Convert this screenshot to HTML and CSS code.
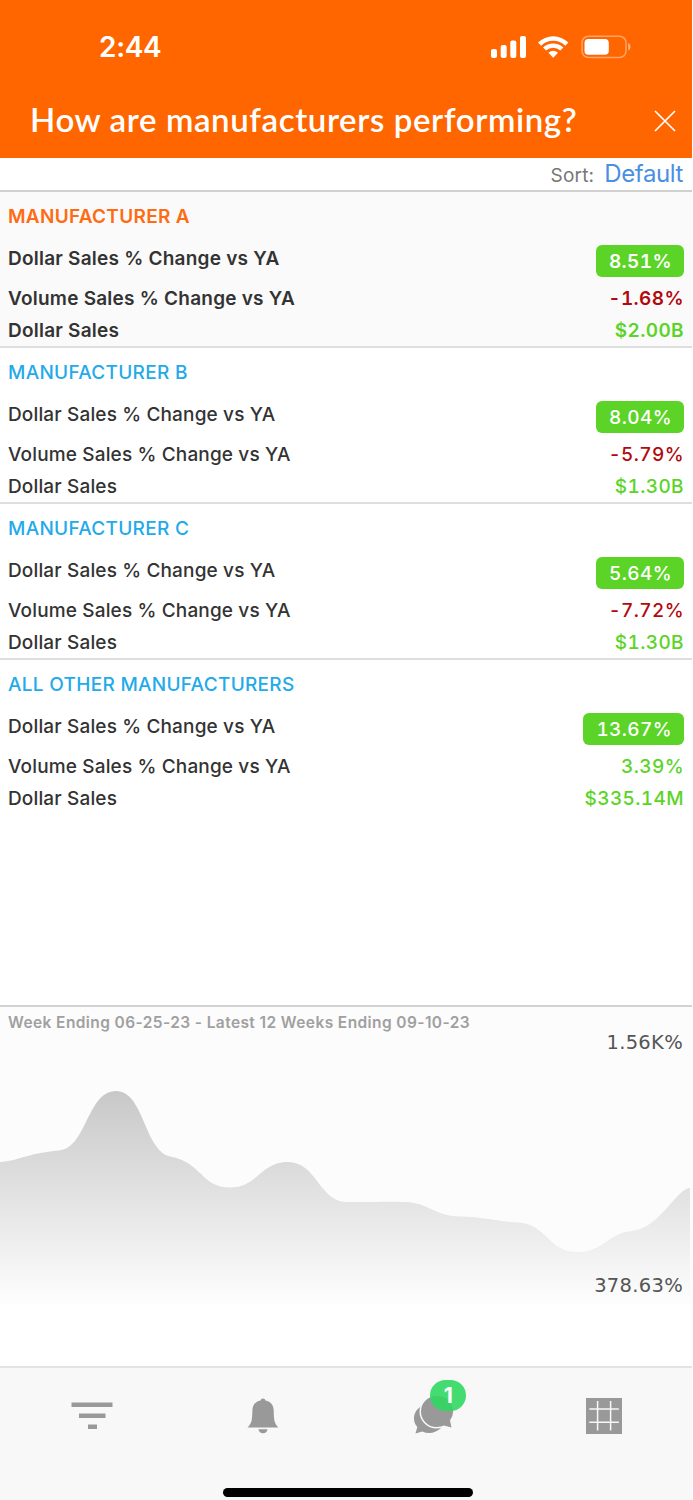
FILE: index.html
```html
<!DOCTYPE html>
<html lang="en">
<head>
    <meta charset="UTF-8">
    <meta name="viewport" content="width=device-width, initial-scale=1.0">
    <title>How are manufacturers performing?</title>
    <link rel="stylesheet" href="styles.css">
</head>
<body>
    <div class="screen">
        <header>
            <div class="status-bar">
                <span class="time">2:44</span>
                <svg class="status-icons" width="142" height="26" viewBox="0 0 142 26" fill="#fff">
                    <!-- Signal -->
                    <rect x="1" y="15" width="6" height="9" rx="2"/>
                    <rect x="10.7" y="11" width="6" height="13" rx="2"/>
                    <rect x="20.3" y="6.5" width="6" height="17.500" rx="2"/>
                    <rect x="30" y="2" width="6" height="22" rx="2"/>
                    <!-- Wifi -->
                    <path d="M48 8.400a22 22 0 0 1 30.400 0L75.300 11.700a17.500 17.500 0 0 0-24.200 0z"/>
                    <path d="M53 13.500a15 15 0 0 1 20.400 0L70.300 16.600a10.500 10.500 0 0 0-14.200 0z"/>
                    <path d="M58.400 18.700a7.800 7.800 0 0 1 9.600 0L63.200 23.700z"/>
                    <!-- Battery -->
                    <rect x="92" y="2.200" width="44" height="21.300" rx="6.500" fill="none" stroke="#fff" stroke-opacity="0.4" stroke-width="1.500"/>
                    <rect x="94.500" y="5" width="24.300" height="15.800" rx="4"/>
                    <path d="M138.200 9v7.500c3-1.200 3-6.300 0-7.500z" opacity="0.5"/>
                </svg>
            </div>
            <div class="title-bar">
                <h1>How are manufacturers performing?</h1>
                <svg class="close" width="22" height="22" viewBox="0 0 22 22" stroke="#fff" stroke-width="1.700">
                    <path d="M1 1L21 21M21 1L1 21"/>
                </svg>
            </div>
        </header>

        <div class="sort-bar">
            <span class="sort-label">Sort:</span>
            <span class="sort-value">Default</span>
        </div>

        <main>
            <div class="card selected">
                <h2>MANUFACTURER A</h2>
                <div class="row main-row"><span class="label">Dollar Sales % Change vs YA</span><span class="badge">8.51%</span></div>
                <div class="row"><span class="label">Volume Sales % Change vs YA</span><span class="value down">-1.68%</span></div>
                <div class="row"><span class="label">Dollar Sales</span><span class="value up">$2.00B</span></div>
            </div>

            <div class="card">
                <h2>MANUFACTURER B</h2>
                <div class="row main-row"><span class="label">Dollar Sales % Change vs YA</span><span class="badge">8.04%</span></div>
                <div class="row"><span class="label">Volume Sales % Change vs YA</span><span class="value down">-5.79%</span></div>
                <div class="row"><span class="label">Dollar Sales</span><span class="value up">$1.30B</span></div>
            </div>

            <div class="card">
                <h2>MANUFACTURER C</h2>
                <div class="row main-row"><span class="label">Dollar Sales % Change vs YA</span><span class="badge">5.64%</span></div>
                <div class="row"><span class="label">Volume Sales % Change vs YA</span><span class="value down">-7.72%</span></div>
                <div class="row"><span class="label">Dollar Sales</span><span class="value up">$1.30B</span></div>
            </div>

            <div class="card">
                <h2>ALL OTHER MANUFACTURERS</h2>
                <div class="row main-row"><span class="label">Dollar Sales % Change vs YA</span><span class="badge">13.67%</span></div>
                <div class="row"><span class="label">Volume Sales % Change vs YA</span><span class="value up">3.39%</span></div>
                <div class="row"><span class="label">Dollar Sales</span><span class="value up">$335.14M</span></div>
            </div>
        </main>

        <section class="chart">
            <!-- Area graph sits behind the labels -->
            <svg class="area" width="692" height="298" viewBox="0 0 692 298">
                <defs>
                    <linearGradient id="fade" gradientUnits="userSpaceOnUse" x1="0" y1="84" x2="0" y2="298">
                        <stop offset="0" stop-color="#c8c8c8"/>
                        <stop offset="1" stop-color="#fefefe"/>
                    </linearGradient>
                </defs>
                <path fill="url(#fade)" d="M0 155C18 154 28 146 59 143.500C87 141 87 84 116 84C144 84 144 143 170 149.500C202 155 201 180.500 230 180.500C258 180.500 260 155 288 155C316 155 319 193 345 195C370 195.500 382 194 405 195C430 196 434 209 460 209.500C485 210 494 214 518 215.500C547 217 548 245 577 245C604 245 607 226.500 632 224C660 221 677 181 690 181V298H0z"/>
            </svg>
            <p class="period">Week Ending 06-25-23 - Latest 12 Weeks Ending 09-10-23</p>
            <span class="axis-max">1.56K%</span>
            <span class="axis-min">378.63%</span>
        </section>

        <nav>
            <div class="tabs">
                <div class="tab">
                    <svg width="42" height="28" viewBox="0 0 42 28" fill="#999">
                        <rect x="0.500" y="0.500" width="41" height="4.500"/>
                        <rect x="8" y="11.500" width="26.500" height="4.500"/>
                        <rect x="17" y="22.500" width="9" height="4.500"/>
                    </svg>
                </div>
                <div class="tab">
                    <svg width="32" height="36" viewBox="0 0 32 36" fill="#999">
                        <path d="M16 0.500c1.200 0 2.100 0.700 2.400 1.900C24 3.500 26.500 7 26.700 12.500C26.900 21 27 25.500 31.500 29.500H0.500C5 25.500 5.200 21 5.400 12.500C5.600 7 8 3.500 13.600 2.400C13.900 1.200 14.800 0.500 16 0.500z"/>
                        <path d="M11.500 31.300h9c-0.300 2.500-2 4-4.500 4s-4.200-1.500-4.500-4z"/>
                    </svg>
                </div>
                <div class="tab chat">
                    <svg width="40" height="40" viewBox="0 0 40 40" fill="#999">
                        <path d="M10 9C-1 13-2.500 25 3.300 31L1.500 37.500L8.300 35.500C15 38.500 22 37 28 31z"/>
                        <path d="M22.500 0A15.500 15.500 0 0 0 22.500 31C26 31 28 30 30 29.500L37.500 31.500L36 24.500A15.500 15.500 0 0 0 22.500 0z" stroke="#f8f8f8" stroke-width="3" paint-order="stroke"/>
                    </svg>
                    <span class="count">1</span>
                </div>
                <div class="tab">
                    <svg width="36" height="36" viewBox="0 0 36 36">
                        <rect width="36" height="36" fill="#999"/>
                        <path d="M11.600 3v29.500M24.600 3v29.500M3.300 11h29.500M3.300 24.200h29.500" stroke="#f8f8f8" stroke-width="1.500"/>
                    </svg>
                </div>
            </div>
            <div class="home-indicator"></div>
        </nav>
    </div>
</body>
</html>
```
FILE: styles.css
```css
/* General Styles */
* {
    box-sizing: border-box;
}

body {
    margin: 0;
    background-color: white;
    font-family: Inter, Arial, sans-serif;
}

.screen {
    display: flex;
    flex-direction: column;
    width: 692px;
    height: 1500px;
}

svg {
    display: block;
}

/* Header */
header {
    height: 158px;
    background-color: #ff6600;
    color: white;
}

.status-bar {
    display: flex;
    justify-content: space-between;
    align-items: center;
    height: 94px;
    padding: 0 60px 0 99px;
}

.time {
    font-size: 28px;
    font-weight: 600;
    letter-spacing: -0.3px;
}

.title-bar {
    display: flex;
    justify-content: space-between;
    align-items: center;
    height: 54px;
    padding: 0 16px 0 30px;
}

h1 {
    margin: 0;
    padding-bottom: 4px;
    font-family: Lato, sans-serif;
    font-size: 33px;
    font-weight: 600;
    letter-spacing: 0.6px;
    white-space: nowrap;
}

/* Sort */
.sort-bar {
    display: flex;
    justify-content: flex-end;
    align-items: baseline;
    gap: 10px;
    height: 32px;
    padding-right: 9px;
    line-height: 32px;
}

.sort-label {
    font-size: 19px;
    color: #777;
    letter-spacing: 0.2px;
}

.sort-value {
    font-size: 24px;
    letter-spacing: -0.4px;
    color: #4a90e2;
}

/* Cards */
main {
    flex: 1;
}

.card {
    height: 156px;
    padding: 8px 8px 0;
    border-top: 2px solid #dedede;
    font-size: 19px;
    line-height: 33px;
    letter-spacing: 0.15px;
    color: #333;
}

.card h2 {
    height: 32px;
    margin: 0 0 10px;
    font-size: 19px;
    font-weight: 450;
    letter-spacing: 0.3px;
    color: #23aae9;
}

.row {
    display: flex;
    justify-content: space-between;
    height: 32px;
}

.main-row {
    height: 40px;
}

.label,
.value {
    font-weight: 450;
}

.value,
.badge {
    font-variant-numeric: tabular-nums;
    letter-spacing: 0.4px;
}

.badge {
    height: 32px;
    margin-top: 3px;
    padding: 0 12px 0 13px;
    border-radius: 6px;
    background-color: #5bd427;
    color: white;
    font-weight: 450;
}

.up {
    color: #5bd427;
}

.down {
    color: #b10a0e;
}

.selected {
    border-top-color: #d0d0d0;
    background-color: #fafafa;
}

.selected h2 {
    color: #ff6b12;
}

.selected .label {
    letter-spacing: 0.23px;
}

.selected h2,
.selected .label,
.selected .value,
.selected .badge {
    font-weight: 570;
}

/* Chart */
.chart {
    position: relative;
    display: flex;
    flex-direction: column;
    height: 361px;
    border-top: 2px solid #d2d2d2;
    background: linear-gradient(#fcfcfc 298px, white 298px);
}

.area {
    position: absolute;
    top: 0;
    left: 0;
}

.period,
.axis-max,
.axis-min {
    position: relative;
}

.period {
    margin: 5px 8px 0;
    font-size: 15.5px;
    line-height: 21px;
    font-weight: 600;
    letter-spacing: 0.4px;
    color: #a0a0a0;
}

.axis-max,
.axis-min {
    padding-right: 9px;
    font-family: "DejaVu Sans", Verdana, sans-serif;
    font-size: 19.5px;
    line-height: 20px;
    letter-spacing: 0.3px;
    text-align: right;
    color: #555;
}

.axis-min {
    margin-top: 223px;
}

/* Bottom Navigation */
nav {
    display: flex;
    flex-direction: column;
    align-items: center;
    height: 134px;
    border-top: 2px solid #e3e3e3;
    background-color: #f8f8f8;
}

.tabs {
    display: flex;
    justify-content: space-between;
    align-items: center;
    width: 100%;
    height: 95px;
    padding: 0 70px 0 71px;
}

.chat {
    position: relative;
    margin: 0 -2px 0 2px;
}

.count {
    position: absolute;
    top: -16px;
    left: 16px;
    width: 36px;
    height: 31px;
    border-radius: 16px;
    background-color: rgba(48, 216, 98, 0.9);
    color: white;
    font-size: 21px;
    line-height: 31px;
    font-weight: 700;
    text-align: center;
}

.home-indicator {
    width: 250px;
    height: 9px;
    margin: 25px 0 0 4px;
    border-radius: 5px;
    background-color: black;
}
```
